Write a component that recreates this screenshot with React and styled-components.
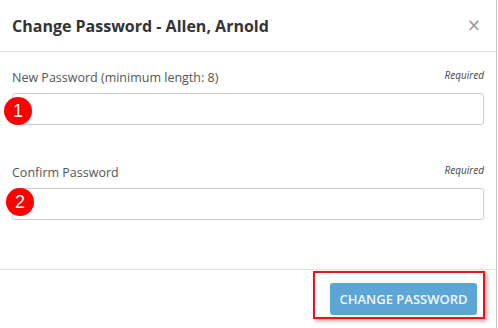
import React from 'react';
import styled, { createGlobalStyle } from 'styled-components';

const GlobalStyle = createGlobalStyle`
  html, body {
    margin: 0;
    padding: 0;
    background: #fff;
  }
  body {
    font-family: "Open Sans", "Liberation Sans", sans-serif;
    color: #333;
  }
`;

const Dialog = styled.div`
  box-sizing: border-box;
  width: 497px;
  height: 328px;
  display: flex;
  flex-direction: column;
  background: #fff;
  border-right: 1px solid #c4c4c4;
`;

const Header = styled.div`
  box-sizing: border-box;
  height: 52px;
  padding: 0 15px 0 12px;
  display: flex;
  align-items: center;
  justify-content: space-between;
  border-bottom: 1px solid #e3e3e3;
`;

const Title = styled.h4`
  margin: 0;
  font-size: 16px;
  font-weight: 700;
  color: #333;
`;

const Close = styled.button`
  border: 0;
  background: none;
  padding: 0;
  color: #999;
  font-size: 17px;
  line-height: 1;
  font-family: "DejaVu Sans", sans-serif;
  cursor: pointer;
`;

const Body = styled.div`
  flex: 1;
  padding: 16px 12px 0 12px;
  display: flex;
  flex-direction: column;
  gap: 38px;
  border-bottom: 1px solid #e3e3e3;
`;

const Field = styled.div`
  position: relative;
  display: flex;
  flex-direction: column;
  gap: 6px;
`;

const LabelRow = styled.div`
  display: flex;
  justify-content: space-between;
  align-items: flex-start;
`;

const Label = styled.label`
  font-size: 12.5px;
  line-height: 18px;
  color: #555;
  padding-top: 1px;
`;

const Required = styled.span`
  font-size: 10px;
  font-style: italic;
  color: #444;
  line-height: 14px;
`;

const Input = styled.input`
  box-sizing: border-box;
  width: 100%;
  height: 32px;
  border: 1px solid #ccc;
  border-radius: 3px;
  padding: 6px 12px;
  font-size: 13px;
  font-family: inherit;
`;

const Badge = styled.span`
  position: absolute;
  left: ${({ $left }) => $left}px;
  top: ${({ $top }) => $top}px;
  width: 28px;
  height: 28px;
  border-radius: 50%;
  background: #f00;
  color: #fff;
  font-family: "Liberation Sans", Arial, sans-serif;
  font-size: 18px;
  display: flex;
  align-items: center;
  justify-content: center;
`;

const Footer = styled.div`
  box-sizing: border-box;
  height: 58px;
  padding: 1px 11px 0 0;
  display: flex;
  justify-content: flex-end;
  align-items: flex-start;
`;

const Highlight = styled.div`
  border: 2px solid #e8141b;
  padding: 10px 6px 2px 15px;
  box-shadow: 2px 2px 4px rgba(0, 0, 0, 0.35);
`;

const Button = styled.button`
  display: block;
  height: 32px;
  width: 147px;
  border: 0;
  border-radius: 3px;
  background: #5ba6d4;
  color: #f4f8fb;
  font-family: "Open Sans", sans-serif;
  font-size: 13px;
  font-weight: 600;
  text-transform: uppercase;
  cursor: pointer;
`;

export default function App() {
  return (
    <>
      <GlobalStyle />
      <Dialog>
        <Header>
          <Title>Change Password - Allen, Arnold</Title>
          <Close aria-label="Close">×</Close>
        </Header>
        <Body>
          <Field>
            <LabelRow>
              <Label>New Password (minimum length: 8)</Label>
              <Required>Required</Required>
            </LabelRow>
            <Input type="password" />
            <Badge $left={-8} $top={29}>1</Badge>
          </Field>
          <Field>
            <LabelRow>
              <Label>Confirm Password</Label>
              <Required>Required</Required>
            </LabelRow>
            <Input type="password" />
            <Badge $left={-6} $top={25}>2</Badge>
          </Field>
        </Body>
        <Footer>
          <Highlight>
            <Button>Change Password</Button>
          </Highlight>
        </Footer>
      </Dialog>
    </>
  );
}
